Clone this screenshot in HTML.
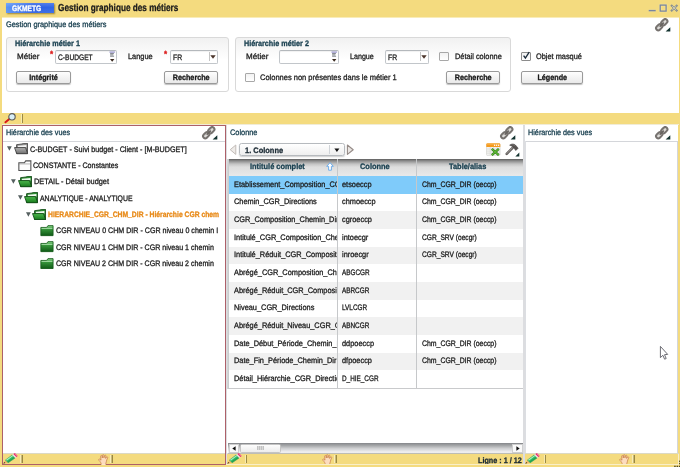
<!DOCTYPE html>
<html>
<head>
<meta charset="utf-8">
<title>Gestion graphique des métiers</title>
<style>
*{box-sizing:border-box;margin:0;padding:0}
html,body{width:680px;height:467px;overflow:hidden}
body{position:relative;background:#f4db7f;font-family:"Liberation Sans",sans-serif;font-size:7.9px;color:#1e1e1e;line-height:10px;-webkit-text-stroke:0.3px}
.abs{position:absolute}
.t{position:absolute;margin-top:.7px;white-space:nowrap;height:10px;line-height:10px;transform-origin:0 50%;transform:scaleX(calc(var(--sx,.89)*1.05)) rotate(.03deg)}
.b{font-weight:bold;--sx:.87}
.teal{color:#183f4f}
/* top white area */
#topwhite{left:2px;top:17px;width:677px;height:96px;background:#fff;border-top:1px solid #f9ecb9}
.grp{border:1px solid #d9d9d9;border-radius:3px;background:linear-gradient(#f1f1f1 0,#fff 22px)}
.inp{background:#fff;border:1px solid #c2c6ca;border-top-color:#b4b8bc;border-radius:2px;box-shadow:inset 0 1px 1px rgba(0,0,0,.06)}
.btn span{display:inline-block;transform:scaleX(.914) rotate(.03deg)}
.btn{border:1px solid #9a9a9a;border-radius:2px;background:linear-gradient(#fefefe,#e9e9e9);box-shadow:0 1px 1px rgba(0,0,0,.25);text-align:center;font-weight:bold;line-height:11px;color:#1a1a1a}
.chk{width:9.6px;height:9.6px;border:1px solid #a8a8a8;border-radius:1px;background:linear-gradient(#f2f2f2,#fff)}
.ast{color:#d22;font-weight:bold;font-size:9px;--sx:.85}
.panel{background:#fff}
.hline{height:1px;background:#d4d6da}
.status{background:#f4db7f}
.sep{width:2.4px;background:linear-gradient(90deg,#fbf2c6 0,#f6e7a6 40%,#a08e48 60%,#94843e 100%)}
.row{position:absolute;left:0;height:17.67px;width:100%}
.cell{position:absolute;top:2.6px;white-space:nowrap;overflow:hidden;height:11px;line-height:11px;transform-origin:0 50%;transform:scaleX(calc(var(--sx,.89)*1.05)) rotate(.03deg)}
</style>
</head>
<body>
<div id="w" style="position:absolute;left:0;top:0;width:680px;height:467px;will-change:transform">
<!-- title bar -->
<div class="abs" style="left:6px;top:3px;width:48px;height:10px;background:linear-gradient(rgba(255,255,255,.18),rgba(255,255,255,0) 45%,rgba(255,255,255,.08)),linear-gradient(100deg,#5c97f6,#2d60e2 55%,#3167e6);box-shadow:1px 1px 1.5px rgba(110,90,20,.65)"></div>
<div class="t b" style="left:12px;top:3.6px;color:#fff;--sx:.8">GKMETG</div>
<div class="t b" style="left:58px;top:1px;font-size:10.2px;line-height:12px;height:12px;--sx:.767;color:#1c1c1c">Gestion graphique des métiers</div>
<!-- window controls -->
<svg class="abs" style="left:647px;top:3px" width="32" height="10" viewBox="0 0 32 10">
 <g stroke="#f8e69a" stroke-width="2.6" fill="none" opacity=".8"><path d="M1.7 7.6H8.7"/><rect x="13.2" y="2.1" width="5.9" height="6"/><path d="M24 2 L30.4 8.2 M30.4 2 L24 8.2"/></g>
 <path d="M1.7 7.6H8.7" stroke="#7884a0" stroke-width="1.5"/>
 <rect x="13.2" y="2.1" width="5.9" height="6" fill="none" stroke="#7884a0" stroke-width="1.3"/>
 <path d="M24 2 L30.4 8.2 M30.4 2 L24 8.2" stroke="#8a8f8a" stroke-width="2.2" fill="none"/>
 <path d="M25.2 3.2 L29.2 7 M29.2 3.2 L25.2 7" stroke="#e4dfc0" stroke-width="0.8" fill="none"/>
</svg>

<div id="topwhite" class="abs"></div>
<div class="t teal" style="left:5.5px;top:19.4px">Gestion graphique des métiers</div>

<!-- chain icon top right -->
<svg class="abs" style="left:654px;top:18px" width="17" height="15" viewBox="0 0 17 15"><use href="#chain"/></svg>

<!-- group 1 -->
<div class="abs grp" style="left:6px;top:37px;width:223px;height:55px"></div>
<div class="t b teal" style="left:14.5px;top:38px">Hiérarchie métier 1</div>
<div class="t" style="left:16.8px;top:51.3px;--sx:.97">Métier</div>
<div class="t ast" style="left:49.7px;top:48.2px">*</div>
<div class="abs inp" style="left:55px;top:50px;width:62px;height:14px"></div>
<div class="t" style="left:58px;top:52.4px;--sx:.80">C-BUDGET</div>
<svg class="abs" style="left:109px;top:51px" width="7" height="12" viewBox="0 0 7 12"><use href="#lov"/></svg>
<div class="t" style="left:127.5px;top:51px">Langue</div>
<div class="t ast" style="left:164.3px;top:48.2px">*</div>
<div class="abs inp" style="left:170px;top:50px;width:48px;height:14px"></div>
<div class="t" style="left:173px;top:52.3px;--sx:.82">FR</div>
<div class="abs" style="left:208.8px;top:52px;width:1px;height:9px;background:#c4c4c4"></div>
<svg class="abs" style="left:210.3px;top:55px" width="6" height="4" viewBox="0 0 6 4"><path d="M0.3 0.3h5.4L3 3.8z" fill="#4a342a"/></svg>
<div class="abs btn" style="left:16.2px;top:71px;width:55px;height:13px"><span>Intégrité</span></div>
<div class="abs btn" style="left:164px;top:71px;width:54px;height:13px"><span>Recherche</span></div>

<!-- group 2 -->
<div class="abs grp" style="left:235px;top:37px;width:276px;height:55px"></div>
<div class="t b teal" style="left:243.5px;top:38px">Hiérarchie métier 2</div>
<div class="t" style="left:245.5px;top:51.3px;--sx:.97">Métier</div>
<div class="abs inp" style="left:279px;top:50px;width:60px;height:14px"></div>
<svg class="abs" style="left:331px;top:51px" width="7" height="12" viewBox="0 0 7 12"><use href="#lov"/></svg>
<div class="t" style="left:349.5px;top:51px;--sx:.86">Langue</div>
<div class="abs inp" style="left:385px;top:50px;width:44px;height:14px"></div>
<div class="t" style="left:388px;top:52.3px;--sx:.82">FR</div>
<div class="abs" style="left:419.8px;top:52px;width:1px;height:9px;background:#c4c4c4"></div>
<svg class="abs" style="left:421.3px;top:55px" width="6" height="4" viewBox="0 0 6 4"><path d="M0.3 0.3h5.4L3 3.8z" fill="#4a342a"/></svg>
<div class="abs chk" style="left:439.2px;top:51.6px"></div>
<div class="t" style="left:454.5px;top:51.5px">Détail colonne</div>
<div class="abs chk" style="left:245.3px;top:72.5px"></div>
<div class="t" style="left:259.5px;top:72px;--sx:.905">Colonnes non présentes dans le métier 1</div>
<div class="abs btn" style="left:446px;top:71px;width:54px;height:13px"><span>Recherche</span></div>

<!-- right of groups -->
<div class="abs chk" style="left:521px;top:51.5px;border-color:#8c8c8c"></div>
<svg class="abs" style="left:522px;top:51px" width="9" height="9" viewBox="0 0 9 9"><path d="M1.6 4.6 L3.4 7 L7.2 1.2" stroke="#1a2a3a" stroke-width="1.3" fill="none"/></svg>
<div class="t" style="left:536px;top:51.5px">Objet masqué</div>
<div class="abs btn" style="left:521px;top:71px;width:62px;height:13px"><span>Légende</span></div>

<!-- yellow toolbar strip -->
<svg class="abs" style="left:3px;top:112px" width="14" height="13" viewBox="0 0 14 13">
 <path d="M2.4 10.2 L6.4 6.9" stroke="#d81818" stroke-width="2" stroke-linecap="round"/>
 <circle cx="9" cy="4.8" r="3.2" fill="#d8eef6" stroke="#5a5a5a" stroke-width="1.1"/>
</svg>
<div class="abs sep" style="left:20.7px;top:114px;height:8.8px"></div>
<div class="abs" style="left:2px;top:123.6px;width:677px;height:1.4px;background:#f1ecd6"></div>

<!-- LEFT PANEL -->
<div class="abs" style="left:2px;top:125px;width:224px;height:340px;background:#ad6069"></div>
<div class="abs panel" style="left:3px;top:126px;width:222px;height:327px"></div>
<div class="abs hline" style="left:3px;top:141px;width:222px"></div>
<div class="abs status" style="left:3px;top:453px;width:222px;height:11px;border-top:1px solid #dcd9c4"></div>
<div class="t teal" style="left:5.5px;top:127px;--sx:.875">Hiérarchie des vues</div>
<svg class="abs" style="left:201px;top:126px" width="17" height="15" viewBox="0 0 17 15"><use href="#chain"/></svg>

<!-- tree -->
<div id="tree">
<svg class="abs" style="left:7.2px;top:146.4px" width="6" height="5" viewBox="0 0 6 5"><path d="M0 0.2h4.8L2.4 4.7z" fill="#566060"/></svg>
<svg class="abs" style="left:14.2px;top:143.3px" width="15" height="11.7" viewBox="0 0 14 11" preserveAspectRatio="none"><use href="#fgrey"/></svg>
<div class="t" style="--sx:0.867;left:29.8px;top:144.0px;">C-BUDGET - Suivi budget - Client - [M-BUDGET]</div>
<svg class="abs" style="left:17.7px;top:159.6px" width="15" height="11.7" viewBox="0 0 14 11" preserveAspectRatio="none"><use href="#fwhite"/></svg>
<div class="t" style="--sx:0.855;left:33.2px;top:160.3px;">CONSTANTE - Constantes</div>
<svg class="abs" style="left:10.9px;top:179.1px" width="6" height="5" viewBox="0 0 6 5"><path d="M0 0.2h4.8L2.4 4.7z" fill="#566060"/></svg>
<svg class="abs" style="left:17.5px;top:176.0px" width="15" height="11.7" viewBox="0 0 14 11" preserveAspectRatio="none"><use href="#fgreen"/></svg>
<div class="t" style="left:34.0px;top:176.7px;">DETAIL - Détail budget</div>
<svg class="abs" style="left:17.8px;top:195.4px" width="6" height="5" viewBox="0 0 6 5"><path d="M0 0.2h4.8L2.4 4.7z" fill="#566060"/></svg>
<svg class="abs" style="left:24.4px;top:192.3px" width="15" height="11.7" viewBox="0 0 14 11" preserveAspectRatio="none"><use href="#fgreen"/></svg>
<div class="t" style="--sx:0.837;left:39.9px;top:193.0px;">ANALYTIQUE - ANALYTIQUE</div>
<svg class="abs" style="left:25.6px;top:211.7px" width="6" height="5" viewBox="0 0 6 5"><path d="M0 0.2h4.8L2.4 4.7z" fill="#566060"/></svg>
<svg class="abs" style="left:32.4px;top:208.6px" width="15" height="11.7" viewBox="0 0 14 11" preserveAspectRatio="none"><use href="#fgreen"/></svg>
<div class="t" style="left:48.2px;top:209.3px;color:#e88a18;font-weight:bold;--sx:.817;">HIERARCHIE_CGR_CHM_DIR - Hiérarchie CGR chem</div>
<svg class="abs" style="left:40.0px;top:225.0px" width="15" height="11.7" viewBox="0 0 14 11" preserveAspectRatio="none"><use href="#fclosed"/></svg>
<div class="t" style="--sx:0.857;left:55.5px;top:225.7px;">CGR NIVEAU 0 CHM DIR - CGR niveau 0 chemin I</div>
<svg class="abs" style="left:40.0px;top:241.3px" width="15" height="11.7" viewBox="0 0 14 11" preserveAspectRatio="none"><use href="#fclosed"/></svg>
<div class="t" style="--sx:0.855;left:55.5px;top:242.0px;">CGR NIVEAU 1 CHM DIR - CGR niveau 1 chemin</div>
<svg class="abs" style="left:40.0px;top:257.6px" width="15" height="11.7" viewBox="0 0 14 11" preserveAspectRatio="none"><use href="#fclosed"/></svg>
<div class="t" style="--sx:0.855;left:55.5px;top:258.3px;">CGR NIVEAU 2 CHM DIR - CGR niveau 2 chemin</div>
</div>

<!-- MIDDLE PANEL -->
<div class="abs" style="left:226px;top:125px;width:299px;height:340px;background:#dcdde0"></div>
<div class="abs panel" style="left:227px;top:125px;width:296px;height:328px"></div>
<div class="t teal" style="left:230px;top:127px">Colonne</div>
<svg class="abs" style="left:499px;top:126px" width="17" height="15" viewBox="0 0 17 15"><use href="#chain"/></svg>

<!-- middle toolbar -->
<svg class="abs" style="left:228.6px;top:144px" width="9" height="12" viewBox="0 0 9 12"><path d="M6.8 1 V10.4 L1.2 5.7 Z" fill="#eeebe8" stroke="#c2bcb8" stroke-width="1" stroke-linejoin="round"/></svg>
<div class="abs" style="left:238.9px;top:142.7px;width:105.8px;height:13.5px;border:1px solid #b6babe;border-radius:2.5px;background:linear-gradient(#fff,#efefef);box-shadow:0 1px 1.5px rgba(0,0,0,.2)"></div>
<div class="t b" style="left:245px;top:145px;color:#1d2c36;--sx:.9">1. Colonne</div>
<div class="abs" style="left:329.2px;top:144.6px;width:1.1px;height:9.8px;background:#d0d4d8"></div>
<svg class="abs" style="left:333.8px;top:147.8px" width="6" height="5" viewBox="0 0 6 5"><path d="M0.4 0.4h5L2.9 4z" fill="#111"/></svg>
<svg class="abs" style="left:345.6px;top:144px" width="9" height="12" viewBox="0 0 9 12"><path d="M1.4 1 V10.4 L7.2 5.7 Z" fill="#e9e5e2" stroke="#948a86" stroke-width="1.1" stroke-linejoin="round"/></svg>
<svg class="abs" style="left:486px;top:143px" width="15" height="13" viewBox="0 0 15 13"><use href="#xls"/></svg>
<svg class="abs" style="left:505px;top:142.5px" width="15" height="14" viewBox="0 0 15 14"><use href="#hammer"/></svg>
<!-- table -->
<div class="abs" style="left:228px;top:159px;width:295px;height:17px;background:linear-gradient(#5e5e5e 0,#8e8e8e 2px,#c4c4c4 5px,#dedede 8px,#e9e9e9 17px)"></div>
<div class="abs" style="left:227px;top:159px;width:2px;height:230px;background:linear-gradient(90deg,#d6dada,#c5c9cb)"></div>
<div class="t b teal" style="left:249.5px;top:161.8px;--sx:.895">Intitulé complet</div>
<svg class="abs" style="left:326px;top:162px" width="8" height="9" viewBox="0 0 8 9"><path d="M4 0.7 L7.3 4.3 H5.4 V8.2 H2.6 V4.3 H0.7 Z" fill="#fff" stroke="#70aeea" stroke-width="1"/></svg>
<div class="t b teal" style="left:360px;top:161.8px;--sx:.895">Colonne</div>
<div class="t b teal" style="left:448.5px;top:161.8px;--sx:.895">Table/alias</div>
<div class="abs" style="left:229px;top:176px;width:294px;height:212px;overflow:hidden" id="tbl">
<div class="row" style="top:0.00px;background:#7fcbfa"><div class="cell" style="left:4.5px;width:110px">Etablissement_Composition_CGR</div><div class="cell" style="left:113px;width:76px">etsoeccp</div><div class="cell" style="left:192.5px;width:104px;--sx:0.834">Chm_CGR_DIR (oeccp)</div></div>
<div class="row" style="top:17.67px;background:#fff"><div class="cell" style="left:4.5px;width:110px">Chemin_CGR_Directions</div><div class="cell" style="left:113px;width:76px">chmoeccp</div><div class="cell" style="left:192.5px;width:104px;--sx:0.834">Chm_CGR_DIR (oeccp)</div></div>
<div class="row" style="top:35.34px;background:#f1f1f1"><div class="cell" style="left:4.5px;width:110px">CGR_Composition_Chemin_Directions</div><div class="cell" style="left:113px;width:76px">cgroeccp</div><div class="cell" style="left:192.5px;width:104px;--sx:0.834">Chm_CGR_DIR (oeccp)</div></div>
<div class="row" style="top:53.01px;background:#fff"><div class="cell" style="left:4.5px;width:110px">Intitulé_CGR_Composition_Chemin</div><div class="cell" style="left:113px;width:76px">intoecgr</div><div class="cell" style="left:192.5px;width:104px;--sx:0.8">CGR_SRV (oecgr)</div></div>
<div class="row" style="top:70.68px;background:#f1f1f1"><div class="cell" style="left:4.5px;width:110px">Intitulé_Réduit_CGR_Composition</div><div class="cell" style="left:113px;width:76px">inroecgr</div><div class="cell" style="left:192.5px;width:104px;--sx:0.8">CGR_SRV (oecgr)</div></div>
<div class="row" style="top:88.35px;background:#fff"><div class="cell" style="left:4.5px;width:110px">Abrégé_CGR_Composition_Chemin</div><div class="cell" style="left:113px;width:76px;--sx:0.77">ABGCGR</div><div class="cell" style="left:192.5px;width:104px"></div></div>
<div class="row" style="top:106.02px;background:#f1f1f1"><div class="cell" style="left:4.5px;width:110px">Abrégé_Réduit_CGR_Composition</div><div class="cell" style="left:113px;width:76px;--sx:0.77">ABRCGR</div><div class="cell" style="left:192.5px;width:104px"></div></div>
<div class="row" style="top:123.69px;background:#fff"><div class="cell" style="left:4.5px;width:110px">Niveau_CGR_Directions</div><div class="cell" style="left:113px;width:76px;--sx:0.77">LVLCGR</div><div class="cell" style="left:192.5px;width:104px"></div></div>
<div class="row" style="top:141.36px;background:#f1f1f1"><div class="cell" style="left:4.5px;width:110px">Abrégé_Réduit_Niveau_CGR_Chemin</div><div class="cell" style="left:113px;width:76px;--sx:0.77">ABNCGR</div><div class="cell" style="left:192.5px;width:104px"></div></div>
<div class="row" style="top:159.03px;background:#fff"><div class="cell" style="left:4.5px;width:110px">Date_Début_Période_Chemin_Dir</div><div class="cell" style="left:113px;width:76px">ddpoeccp</div><div class="cell" style="left:192.5px;width:104px;--sx:0.834">Chm_CGR_DIR (oeccp)</div></div>
<div class="row" style="top:176.70px;background:#f1f1f1"><div class="cell" style="left:4.5px;width:110px">Date_Fin_Période_Chemin_Dir</div><div class="cell" style="left:113px;width:76px">dfpoeccp</div><div class="cell" style="left:192.5px;width:104px;--sx:0.834">Chm_CGR_DIR (oeccp)</div></div>
<div class="row" style="top:194.37px;background:#fff"><div class="cell" style="left:4.5px;width:110px">Détail_Hiérarchie_CGR_Directions</div><div class="cell" style="left:113px;width:76px;--sx:0.77">D_HIE_CGR</div><div class="cell" style="left:192.5px;width:104px"></div></div>
</div>
<div class="abs" style="left:336.5px;top:159px;width:1px;height:229px;background:#c6c8ca"></div>
<div class="abs" style="left:416px;top:159px;width:1px;height:229px;background:#c6c8ca"></div>
<div class="abs" style="left:228px;top:388px;width:295px;height:1px;background:#c9cacc"></div>
<!-- hscroll -->
<div class="abs" style="left:228px;top:443px;width:295px;height:11px;background:linear-gradient(#84868a 0,#a4a6a8 2.5px,#cfd0d2 5.5px,#ebebed 8.5px,#efeff1 10px,#bdbdb5 10px,#bdbdb5 11px)"></div>
<div class="abs" style="left:228.5px;top:443.5px;width:10px;height:9.5px;background:#fafafa;border:1px solid #cfcfcf"></div>
<svg class="abs" style="left:231.5px;top:446px" width="4" height="5" viewBox="0 0 4 5"><path d="M3.6 0.2V4.8L0.3 2.5z" fill="#111"/></svg>
<div class="abs" style="left:239.5px;top:443.5px;width:41px;height:9.5px;background:linear-gradient(#fdfdfd,#ececec);border:1px solid #c4c4c4;border-radius:1.5px"></div>
<div class="abs" style="left:256.5px;top:446px;width:7px;height:4px;background:repeating-linear-gradient(90deg,#c2c2c2 0,#c2c2c2 1px,#d9d9d9 1px,#d9d9d9 2px)"></div>
<div class="abs" style="left:512px;top:443.5px;width:10.5px;height:9.5px;background:#fafafa;border:1px solid #cfcfcf"></div>
<svg class="abs" style="left:515.5px;top:446px" width="4" height="5" viewBox="0 0 4 5"><path d="M0.4 0.2V4.8L3.7 2.5z" fill="#111"/></svg>
<!-- status bars -->
<div class="abs status" style="left:227px;top:454px;width:296px;height:10px"></div>
<div class="t b" style="left:478px;top:455px;color:#1d2c36">Ligne : 1 / 12</div>

<!-- RIGHT PANEL -->
<div class="abs panel" style="left:525px;top:125px;width:153px;height:328px"></div>
<div class="abs hline" style="left:525px;top:141px;width:153px"></div>
<div class="abs" style="left:677px;top:141px;width:1px;height:312px;background:#d4d6da"></div>
<div class="abs" style="left:525px;top:141px;width:1px;height:312px;background:#dcdee2"></div>
<div class="t teal" style="left:528px;top:127px;--sx:.875">Hiérarchie des vues</div>
<svg class="abs" style="left:654px;top:126px" width="17" height="15" viewBox="0 0 17 15"><use href="#chain"/></svg>
<div class="abs status" style="left:525px;top:453px;width:153.6px;height:11px;border-top:1px solid #dcd9c4"></div>

<div class="abs" style="left:678.2px;top:453.6px;width:0.9px;height:11.6px;background:#f9efc8"></div>
<svg class="abs" style="left:672px;top:458px" width="8" height="9" viewBox="0 0 8 9"><g fill="#4c4622"><rect x="2.2" y="7.7" width="1.5" height="1.3"/><rect x="4.6" y="7.7" width="1.5" height="1.3"/><rect x="7" y="7.7" width="1" height="1.3"/><rect x="7.1" y="2.6" width="0.9" height="1.4"/><rect x="7.1" y="4.9" width="0.9" height="1.3"/></g></svg>
<!-- status icons -->
<svg class="abs" style="left:2.9px;top:453px" width="15" height="11" viewBox="0 0 15 11"><use href="#pencil"/></svg>
<div class="abs sep" style="left:20.2px;top:454.6px;height:8.6px"></div>
<svg class="abs" style="left:97.6px;top:453.6px" width="11" height="11" viewBox="0 0 11 11"><use href="#hand"/></svg>
<div class="abs sep" style="left:110.4px;top:454.6px;height:8.6px"></div>
<svg class="abs" style="left:227.3px;top:453px" width="15" height="11" viewBox="0 0 15 11"><use href="#pencil"/></svg>
<div class="abs sep" style="left:244.9px;top:454.6px;height:8.6px"></div>
<svg class="abs" style="left:321.5px;top:453.6px" width="11" height="11" viewBox="0 0 11 11"><use href="#hand"/></svg>
<div class="abs sep" style="left:334.2px;top:454.6px;height:8.6px"></div>
<svg class="abs" style="left:525.2px;top:453px" width="15" height="11" viewBox="0 0 15 11"><use href="#pencil"/></svg>
<div class="abs sep" style="left:543.8px;top:454.6px;height:8.6px"></div>
<svg class="abs" style="left:619.2px;top:453.6px" width="11" height="11" viewBox="0 0 11 11"><use href="#hand"/></svg>
<div class="abs sep" style="left:632.2px;top:454.6px;height:8.6px"></div>
<!-- mouse cursor -->
<svg class="abs" style="left:658px;top:344px" width="12" height="17" viewBox="0 0 12 17"><path d="M2.4 2.4 V13.6 L4.9 11.3 L6.6 15.2 L8.2 14.5 L6.5 10.7 L9.7 10.4 Z" fill="#fff" stroke="#5c5c64" stroke-width="0.9" stroke-linejoin="round"/></svg>
<!-- bottom edge -->
<div class="abs" style="left:226px;top:464.3px;width:453px;height:1px;background:#f9efc8"></div>

<svg width="0" height="0" style="position:absolute">
 <defs>
  <g id="chain">
   <g stroke="#76726f" stroke-width="2" fill="#dddbd8">
    <rect x="1.7" y="7" width="7" height="4.4" rx="2.2" transform="rotate(-45 5.2 9.2)"/>
    <rect x="6.8" y="2" width="7" height="4.4" rx="2.2" transform="rotate(-45 10.3 4.2)"/>
   </g>
   <path d="M6.2 8.2 L9.3 5.2" stroke="#6a6663" stroke-width="1.7" stroke-linecap="round"/>
   <path d="M3.2 9.6 L5.2 7.6 M8.6 4.2 L10.4 2.4" stroke="#a9a6a3" stroke-width="0.7"/>
   <path d="M16.3 9.2 V13.4 H11.6 Z" fill="#12322f"/>
  </g>
  <linearGradient id="gg" x1="0" y1="0" x2="0" y2="1"><stop offset="0" stop-color="#4cb84c"/><stop offset="1" stop-color="#177a1c"/></linearGradient>
  <linearGradient id="gk" x1="0" y1="0" x2="0" y2="1"><stop offset="0" stop-color="#b4b4b4"/><stop offset="1" stop-color="#6e6e6e"/></linearGradient>
  <linearGradient id="gc" x1="0" y1="0" x2="0" y2="1"><stop offset="0" stop-color="#8fd88f"/><stop offset=".3" stop-color="#3a9a3e"/><stop offset="1" stop-color="#0f5a16"/></linearGradient>
  <g id="fgrey">
   <path d="M2.4 9.8 V1.6 L7.6 0.9 L8.6 0.3 H12.6 V9.8 Z" fill="#8c8c8c" stroke="#444" stroke-width="0.8" stroke-linejoin="round"/>
   <path d="M3.6 2.6 L11.6 1.8 V4.2 H3.6 Z" fill="#f4f4f4"/>
   <path d="M0.5 4.3 H10.8 L12.7 10.1 H2.5 Z" fill="url(#gk)" stroke="#3c3c3c" stroke-width="0.8" stroke-linejoin="round"/>
  </g>
  <g id="fgreen">
   <path d="M2.4 9.8 V1.6 L7.6 0.9 L8.6 0.3 H12.6 V9.8 Z" fill="#2c8a30" stroke="#0f4614" stroke-width="0.8" stroke-linejoin="round"/>
   <path d="M3.6 2.6 L11.6 1.8 V4.2 H3.6 Z" fill="#eef8ee"/>
   <path d="M0.5 4.3 H10.8 L12.7 10.1 H2.5 Z" fill="url(#gg)" stroke="#0f4614" stroke-width="0.8" stroke-linejoin="round"/>
  </g>
  <g id="fclosed">
   <path d="M0.8 10 V2.3 H6.2 L7.4 0.6 H12.2 V10 Z" fill="url(#gc)" stroke="#155a1a" stroke-width="0.8" stroke-linejoin="round"/>
   <path d="M1.4 3.2 H11.6" stroke="#c8f0c8" stroke-width="0.7"/>
  </g>
  <g id="fwhite">
   <path d="M0.8 10 V2.6 H6 L7.2 0.8 H12 V10 Z" fill="#fdfdfd" stroke="#505050" stroke-width="1"/>
   <path d="M0.8 3.7 H12" stroke="#8a8a8a" stroke-width="0.6"/>
  </g>
  <g id="xls">
   <rect x="0.5" y="1" width="13.6" height="11.4" rx="0.8" fill="#f3f3f1" stroke="#cfcfcb" stroke-width="0.6"/>
   <path d="M0.3 4 V1.6 Q0.3 0.3 1.6 0.3 H13 Q14.3 0.3 14.3 1.6 V4 Z" fill="#f59a1d"/>
   <path d="M0.8 1.1H13.8" stroke="#fbc069" stroke-width="0.7"/>
   <g fill="#fff"><circle cx="8.6" cy="2.3" r="0.7"/><circle cx="10.6" cy="2.3" r="0.7"/><circle cx="12.6" cy="2.3" r="0.7"/></g>
   <path d="M0.6 6H14M0.6 8.1H14M0.6 10.2H14M4.2 4V12.2M7.6 4V12.2M11 4V12.2" stroke="#d3d3cf" stroke-width="0.6"/>
   <path d="M5.8 5.8 L12.8 12.2 M12.8 5.8 L5.8 12.2" stroke="#2f7d1c" stroke-width="2.3"/>
   <path d="M5.8 5.8 L12.8 12.2 M12.8 5.8 L5.8 12.2" stroke="#63bd35" stroke-width="1.1"/>
  </g>
  <g id="hammer">
   <path d="M1.7 10.9 L7.6 4.8" stroke="#5e5a58" stroke-width="2.5" stroke-linecap="round"/>
   <path d="M1.9 10.5 L7.6 4.6" stroke="#b4b0ac" stroke-width="0.8" stroke-linecap="round"/>
   <path d="M4.6 2.2 C6.4 0.6 8.8 0.6 10.4 2 L13.2 5.2 L10.8 7.6 L9 5.2 C8 3.6 6.4 2.8 4.6 2.2 Z" fill="#55514f" stroke="#3a3634" stroke-width="0.5"/>
   <path d="M6.4 1.8 C8 1.4 9.2 2 10.2 3" stroke="#8a8684" stroke-width="0.6" fill="none"/>
   <path d="M14.3 9.6 V13.6 H10.3 Z" fill="#12322f"/>
  </g>
  <g id="pencil">
   <path d="M2.2 7.2 L9.2 1.9 L12.2 5 L5 9.9 Z" fill="#2dbb62" stroke="#1f8a46" stroke-width="0.4"/>
   <path d="M3.4 7.2 L9.8 2.6" stroke="#a6f0c2" stroke-width="1.1"/>
   <path d="M4.6 9 L11.4 4.4" stroke="#1f9a4e" stroke-width="0.9"/>
   <path d="M9.2 1.9 L10.4 1 L13.4 4.1 L12.2 5 Z" fill="#e4e4e4"/>
   <path d="M10.4 1 L11.9 0.1 L14.7 2.9 L13.4 4.1 Z" fill="#e9246c"/>
   <path d="M11.6 0.5 L14.3 3.2" stroke="#f7a0c0" stroke-width="0.6"/>
   <path d="M0.7 10.3 L2.2 7.2 L5 9.9 Z" fill="#f2b868"/>
   <path d="M0.3 10.7 L1.2 8.9 L2.3 10.1 Z" fill="#3a2a1a"/>
  </g>
  <g id="hand">
   <path d="M3.3 10.6 C3.2 8.8 2.2 7.6 1 6.4 C0.2 5.6 1 4.7 1.9 5.3 L3 6.2 L2.6 2.4 C2.5 1.4 3.8 1.2 4 2.2 L4.3 4 L4.5 1.3 C4.6 0.3 5.9 0.4 5.9 1.4 L5.9 3.9 L6.6 1.7 C6.9 0.8 8.1 1.1 7.9 2.1 L7.5 4.4 L8.5 3.1 C9.1 2.4 10 3 9.6 3.8 C8.8 5.4 8.6 6.6 8.3 7.8 C8.1 8.8 7.6 9.6 7.6 10.6 Z" fill="#fcdcbe" stroke="#c98048" stroke-width="0.75" stroke-linejoin="round"/>
   <path d="M3.4 10.6 H7.6" stroke="#fbe6cc" stroke-width="1.2"/>
  </g>
  <g id="lov">
   <path d="M0.5 1.1h5.4" stroke="#8a86c6" stroke-width="1.1"/>
   <path d="M1.1 2.6h3.8M1.1 3.9h3.2M1.1 5.2h4" stroke="#7c8088" stroke-width="1"/>
   <path d="M1 8.1h4.4L3.2 10.7z" fill="#3a2a20"/>
  </g>
 </defs>
</svg>
</div>
</body>
</html>
